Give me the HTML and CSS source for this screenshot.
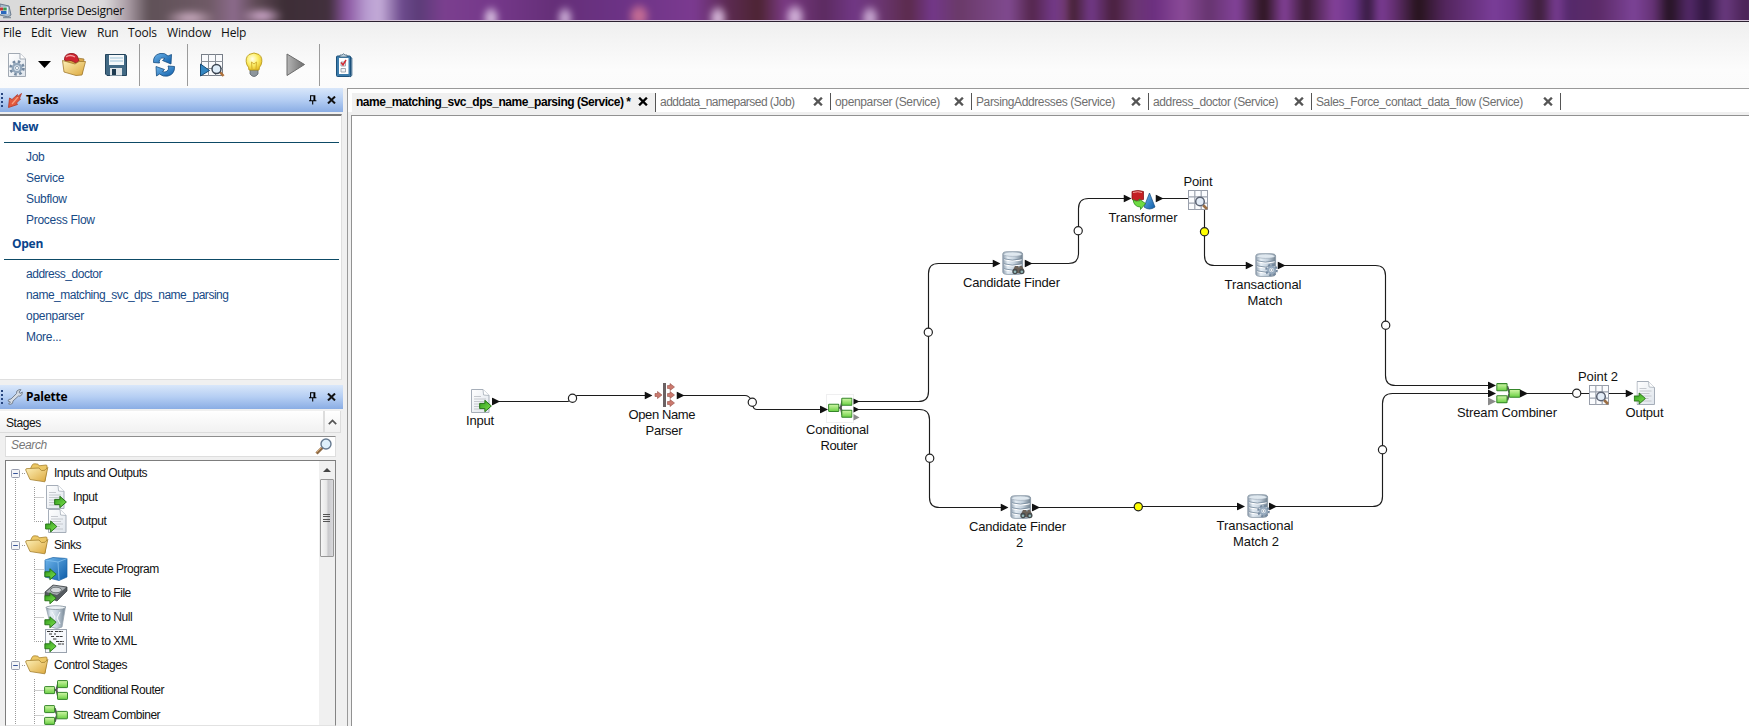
FILE: index.html
```html
<!DOCTYPE html>
<html lang="en">
<head>
<meta charset="utf-8">
<title>Enterprise Designer</title>
<link rel="stylesheet" href="styles.css">
</head>
<body>
<svg class="defs" width="0" height="0" aria-hidden="true">
  <defs>
    <linearGradient id="gFolder" x1="0" y1="0" x2="1" y2="1"><stop offset="0" stop-color="#fdf0b8"/><stop offset="1" stop-color="#dca83c"/></linearGradient>
    <linearGradient id="gGreen" x1="0" y1="0" x2="0" y2="1"><stop offset="0" stop-color="#d2f7a8"/><stop offset="1" stop-color="#69cf42"/></linearGradient>
    <linearGradient id="gArrow" x1="0" y1="0" x2="1" y2="1"><stop offset="0" stop-color="#2f9a1c"/><stop offset="1" stop-color="#7fe34d"/></linearGradient>
    <linearGradient id="gDb" x1="0" y1="0" x2="1" y2="0"><stop offset="0" stop-color="#8d9dad"/><stop offset=".25" stop-color="#e6eef5"/><stop offset=".6" stop-color="#c3d0dc"/><stop offset="1" stop-color="#71818f"/></linearGradient>
    <linearGradient id="gBlue" x1="0" y1="0" x2="1" y2="1"><stop offset="0" stop-color="#6fb6ec"/><stop offset="1" stop-color="#0d5ca8"/></linearGradient>
    <linearGradient id="gGrey" x1="0" y1="0" x2="1" y2="0"><stop offset="0" stop-color="#b5b5b5"/><stop offset="1" stop-color="#6e6e6e"/></linearGradient>
    <linearGradient id="gPage" x1="0" y1="0" x2="1" y2="1"><stop offset="0" stop-color="#ffffff"/><stop offset="1" stop-color="#dfe5ec"/></linearGradient>
    <radialGradient id="gBulb" cx=".4" cy=".35" r=".7"><stop offset="0" stop-color="#fffef0"/><stop offset=".5" stop-color="#fdf06a"/><stop offset="1" stop-color="#e6bd22"/></radialGradient>

    <symbol id="folder" viewBox="0 0 24 20">
      <path d="M4 9 L7 2.2 Q8 .6 10 .8 L13 1.2 L14 2.8 L21 2 Q22.5 2 22 4 L20 18 Z" fill="#ecc866" stroke="#aa8430" stroke-width=".8"/>
      <path d="M.7 7 Q.5 5.6 2 5.6 L14 5 L16.5 7.6 L20 7.2 L22.8 4.4 L19.8 18.8 L5 16.5 Z" fill="url(#gFolder)" stroke="#a5802f" stroke-width=".8"/>
    </symbol>
    <symbol id="garrow" viewBox="0 0 12 12">
      <path d="M.6 3.6 H5.4 V.7 L11.4 6 L5.4 11.3 V8.4 H.6 Z" fill="url(#gArrow)" stroke="#226f14" stroke-width=".9"/>
    </symbol>
    <symbol id="sheet" viewBox="0 0 19 24">
      <path d="M.5 .5 H12 L18 6.5 V23.5 H.5 Z" fill="url(#gPage)" stroke="#a6aeb9" stroke-width="1"/>
      <path d="M12 .5 L12.6 6 L18 6.5" fill="#fff" stroke="#a6aeb9" stroke-width=".8"/>
      <path d="M3 7.5h7M3 10h12M3 12.5h10M3 15h12M3 17.5h9M3 20h12" stroke="#bfc3c8" stroke-width=".9" fill="none"/>
    </symbol>
    <symbol id="input" viewBox="0 0 22 24">
      <use href="#sheet" x="1" y="0" width="19" height="24"/>
      <use href="#garrow" x="9" y="10.5" width="13" height="13"/>
    </symbol>
    <symbol id="output" viewBox="0 0 22 24">
      <use href="#sheet" x="3" y="0" width="19" height="24"/>
      <use href="#garrow" x="0" y="11" width="12.5" height="13"/>
    </symbol>
    <symbol id="router" viewBox="0 0 24 20">
      <path d="M10 10 H12.5 L14 4 H15 M12.5 10 L14 16 H15" stroke="#555" stroke-width="2" fill="none"/>
      <g fill="url(#gGreen)" stroke="#35862a"><rect x=".6" y="6.6" width="10" height="7" rx=".6"/><rect x="13.5" y=".6" width="10" height="7" rx=".6"/><rect x="13.5" y="12.4" width="10" height="7" rx=".6"/></g>
    </symbol>
    <symbol id="combiner" viewBox="0 0 24 20">
      <path d="M10 4 H11 L13 10 M10 16 H11 L13 10" stroke="#555" stroke-width="2" fill="none"/>
      <g fill="url(#gGreen)" stroke="#35862a"><rect x=".6" y=".6" width="10" height="7" rx=".6"/><rect x=".6" y="12.4" width="10" height="7" rx=".6"/><rect x="12.8" y="6.4" width="10.6" height="7.4" rx=".6"/></g>
    </symbol>
    <symbol id="db" viewBox="0 0 22 24">
      <path d="M.8 3 Q.8 .8 5 .7 H16 Q20.6 .8 20.6 3 V21 Q20.6 23.4 15 23.4 H6 Q.8 23.4 .8 21 Z" fill="url(#gDb)" stroke="#8795a3" stroke-width=".8"/>
      <ellipse cx="10.7" cy="3.2" rx="9.3" ry="2.2" fill="#dfe8ef" stroke="#9aa8b5" stroke-width=".6"/>
      <path d="M2 8.6 Q10 11.2 19.6 8.6 M2 13.6 Q10 16.2 19.6 13.6 M2 18.6 Q10 21.2 19.6 18.6" stroke="#fff" stroke-width="1.1" fill="none"/>
      <path d="M2 7.8 Q10 10.4 19.6 7.8 M2 12.8 Q10 15.4 19.6 12.8 M2 17.8 Q10 20.4 19.6 17.8" stroke="#74889a" stroke-width=".8" fill="none"/>
    </symbol>
    <symbol id="gear" viewBox="0 0 14 14">
      <circle cx="7" cy="7" r="5.6" fill="none" stroke="#7489a0" stroke-width="2.4" stroke-dasharray="2.2 2.2"/>
      <circle cx="7" cy="7" r="3.6" fill="#e5edf4" stroke="#93a7bb" stroke-width="2.2"/>
      <circle cx="7" cy="7" r="1.4" fill="#fff" stroke="#6f859b" stroke-width=".6"/>
    </symbol>
    <symbol id="finder" viewBox="0 0 24 24">
      <use href="#db" x="0" y="0" width="22" height="24"/>
      <path d="M11 19 L13 15 H16 L17 17 L18 15 H20 L22 19 V22 H11 Z" fill="#6b6157"/>
      <circle cx="13" cy="20.5" r="2.7" fill="#454b4d"/><circle cx="19.800" cy="20.5" r="2.7" fill="#454b4d"/>
      <circle cx="13" cy="20.7" r="1.3" fill="#93b9b9"/><circle cx="19.800" cy="20.7" r="1.3" fill="#93b9b9"/>
    </symbol>
    <symbol id="match" viewBox="0 0 24 24">
      <use href="#db" x="0" y="0" width="22" height="24"/>
      <use href="#gear" x="10" y="10.5" width="13" height="13"/>
    </symbol>
    <symbol id="point" viewBox="0 0 20 20">
      <rect x=".5" y=".5" width="19" height="19" fill="#fbfcfe" stroke="#989eaa"/>
      <path d="M6.8 0V20M13.2 0V20M0 6.8H20M0 13.2H20" stroke="#9da3af" stroke-width="1.2"/>
      <path d="M15 15 L19 19" stroke="#9b6f45" stroke-width="2.6"/>
      <circle cx="12" cy="11.5" r="4.3" fill="#e3ecf7" stroke="#5c6474" stroke-width="1.5"/>
    </symbol>
    <symbol id="minus" viewBox="0 0 9 9"><rect x=".5" y=".5" width="8" height="8" rx="1" fill="#f4f5f8" stroke="#979cae"/><path d="M2.2 4.5h4.6" stroke="#37549a"/></symbol>
    <symbol id="cross" viewBox="0 0 9 8"><path d="M1 .6 L8 7.4 M8 .6 L1 7.4" stroke="currentColor" stroke-width="2.1"/></symbol>
    <symbol id="pin" viewBox="0 0 8 10"><path d="M1.6 5.5V.8H5.8V5.5M5 .8V5.5M0 5.8H7.4M3.7 6V9.6" stroke="#000" stroke-width="1.1" fill="none"/></symbol>
    <symbol id="port" viewBox="0 0 8 8"><path d="M0 0 L8 4 L0 8Z"/></symbol>
  </defs>
</svg>

<div class="window">
  <header class="titlebar">
    <div class="aero"></div>
    <svg class="app-icon" viewBox="0 0 12 16"><path d="M0 1 L9 3 L11 12 L8 14 L0 12Z" fill="#a9bccd" stroke="#6b7b8e"/><rect x="0" y="4" width="8" height="7" fill="#e6eefa"/><rect x="0" y="4.500" width="3" height="3" fill="#c23b39"/><rect x="3.200" y="4.500" width="3.500" height="3" fill="#3b9a50"/><rect x="1" y="8" width="5.500" height="3" fill="#2a67bd"/><path d="M3 14.500H11" stroke="#82909f" stroke-width="1.500"/></svg>
    <span class="title">Enterprise Designer</span>
  </header>

  <nav class="menubar">
    <span class="m-file">File</span><span class="m-edit">Edit</span><span class="m-view">View</span><span class="m-run">Run</span><span class="m-tools">Tools</span><span class="m-window">Window</span><span>Help</span>
  </nav>

  <div class="toolbar">
    <svg width="348" height="44" viewBox="0 43 348 44">
      <path d="M139.500 44V86M187.500 44V86M319.500 44V86" stroke="#9b9b9b"/>
      <path d="M8.500 53.500H20L25.500 59V76.500H8.500Z" fill="url(#gPage)" stroke="#a1a9b3"/><path d="M20 53.500V59H25.500" fill="#fff" stroke="#a1a9b3"/>
      <use href="#gear" x="9" y="60" width="16" height="16"/>
      <path d="M38 61H51L44.500 68Z" fill="#000"/>
      <path d="M64 62 L67 56 L71 57 L84 59 L82 74Z" fill="#d8a648" stroke="#96702d" stroke-width=".7"/>
      <path d="M64.500 60 Q64 54.500 70 53.500 Q74 52.800 77 55.500 L79 61 L76 63 Q71 59 66 61Z" fill="#cf2430" stroke="#8a1720" stroke-width=".8"/>
      <path d="M66 57 Q70 54 75 57" stroke="#f4a0a0" stroke-width="1.300" fill="none"/>
      <path d="M62.500 60.500 L75 64 L79 61.500 L85.500 61.500 L82 75 L76 75.500 L64 72Z" fill="url(#gFolder)" stroke="#a17a2e" stroke-width=".8"/>
      <path d="M105.500 54.500H125.500L126.500 56V75.500H107L105.500 74Z" fill="#426984" stroke="#24445c"/>
      <rect x="109" y="55" width="15" height="10" fill="#f4f8fa"/><path d="M110 58H123M110 61H123" stroke="#9dc2d8"/>
      <rect x="110" y="68" width="12" height="7.500" fill="#e0e5e8"/><rect x="112" y="69" width="4" height="6" fill="#1e3b50"/>
      <path d="M153.500 62.500 Q153 55 160 53.500 Q165 52.500 168 56 L171.500 54.500 L171 64 L162.500 60.500 L165 58.500 Q161.500 56.500 159.500 60 Q159 61.500 159.500 63Z" fill="url(#gBlue)" stroke="#174d80" stroke-width=".8"/>
      <path d="M174.500 66.500 Q175 74 168 76 Q163 77 159.500 74 L156.500 76 L156 66.500 L164.500 69.500 L162.500 71.500 Q166.500 73 168.300 69.500 Q169 68 168 66Z" fill="url(#gBlue)" stroke="#174d80" stroke-width=".8"/>
      <g transform="translate(1 0)"><rect x="200.500" y="54.500" width="21" height="21" fill="#f9fafc" stroke="#777e88"/><path d="M207.500 54V76M214.500 54V76M200 61.500H222M200 68.500H222" stroke="#8a9098"/>
      <path d="M199.500 64V76L208.500 70.500Z" fill="#3487c2" stroke="#184b75"/><path d="M219 72L222.500 76" stroke="#af713b" stroke-width="2.600"/><circle cx="215.500" cy="69" r="4.500" fill="#dfedf9" stroke="#394350" stroke-width="1.400"/></g>
      <path d="M250 70V74Q254 79 258 74V70Z" fill="#8d969d" stroke="#5a6269" stroke-width=".8"/><path d="M249 70Q249 67 247 65Q244.500 58 249 54.500Q254 51.500 259 54.500Q263.500 58 261 65Q259 67 259 70Z" fill="url(#gBulb)" stroke="#bb9c1d" stroke-width=".9"/><path d="M252 69L251.500 62L254 64L256.500 62L256 69" fill="none" stroke="#cfaa2c" stroke-width=".9"/>
      <path d="M287 54L304.500 64.500L287 75.500Z" fill="url(#gGrey)" stroke="#6c6c6c"/>
    </svg>
    <svg class="clipboard" viewBox="0 0 18 25"><rect x="1.500" y="3" width="14" height="20.500" rx="1" fill="#3c7cab" stroke="#1c517b"/><path d="M15.500 4L16.800 5V22.500L15 24" fill="none" stroke="#1c517b"/><path d="M5 4V2H7Q8.500 -.5 10 2H12V4Z" fill="#c1d3df" stroke="#47677e" stroke-width=".8"/><rect x="4" y="5" width="9.500" height="16" fill="#fff"/><path d="M6 9H10.500V13H6Z M6 15.500H10.500V19H6Z" fill="#f3f4f7" stroke="#99a1ab" stroke-width=".9"/><path d="M6.200 9.500L8 12L11 7" fill="none" stroke="#d22b33" stroke-width="1.500"/></svg>
  </div>

  <div class="workspace">
    <aside class="dock">
      <section class="pane tasks">
        <div class="pane-head"><i class="grip"></i>
          <svg class="pane-icon" viewBox="0 0 14 15"><path d="M.5 14.500L1.500 5L4 6.500L9.500 1.500L9 4L13.500 .5L11.500 5.500L12.500 6L8.500 10L9.500 11.500Z" fill="#e2593d" stroke="#b0372a" stroke-width=".8"/><path d="M4 11L10 4" stroke="#f8a080" stroke-width="1.200"/></svg>
          <b>Tasks</b><svg class="pin"><use href="#pin"/></svg><svg class="close"><use href="#cross"/></svg></div>
        <div class="task-body">
          <h2>New</h2>
          <ul><li>Job</li><li>Service</li><li>Subflow</li><li>Process Flow</li></ul>
          <h2 class="open">Open</h2>
          <ul><li class="long">address_doctor</li><li class="long">name_matching_svc_dps_name_parsing</li><li>openparser</li><li>More...</li></ul>
        </div>
      </section>

      <section class="pane palette">
        <div class="pane-head"><i class="grip"></i>
          <svg class="pane-icon wrench" viewBox="0 0 16 16"><path d="M1 12 Q1 10 4 10 L9.500 4.500 Q9 1.500 12 .7 L14 .7 L12 3 L13 4.500 L15.300 3 Q15.800 6 13 7.200 L11.500 7 L6 12 Q6.200 15 3.500 15.300 L1.500 15 L3.500 13Z" fill="#d6dce4" stroke="#6c7888" stroke-width=".9"/></svg>
          <b>Palette</b><svg class="pin"><use href="#pin"/></svg><svg class="close"><use href="#cross"/></svg></div>
        <div class="stages"><span>Stages</span><i class="collapse"><svg width="9" height="6" viewBox="0 0 9 6"><path d="M.8 5.200L4.500 1.500L8.200 5.200" fill="none" stroke="#555" stroke-width="1.700"/></svg></i></div>
        <div class="search"><em>Search</em><svg width="18" height="17" viewBox="0 0 18 17"><path d="M1.500 15.500L7.500 9.500" stroke="#8e6a45" stroke-width="3"/><path d="M1.500 14.500L7 9" stroke="#d3a671" stroke-width="1"/><circle cx="11" cy="6" r="5" fill="#dff0fb" stroke="#667a90" stroke-width="1.400"/></svg></div>
        <div class="tree">
          <svg class="tree-lines" width="40" height="266" viewBox="0 0 40 266"><g fill="none" stroke="#9a9a9a" stroke-dasharray="1 1"><path d="M9.500 18V266M16 12.500H20M16 84.500H20M16 204.500H20M28.500 26V60.500H38M28.500 36.500H38M28.500 98V180.500H38M28.500 108.500H38M28.500 132.500H38M28.500 156.500H38M28.500 218V266M28.500 229.500H38M28.500 254.500H38"/></g></svg>
          <div class="rows">
            <div class="grp"><svg class="exp"><use href="#minus"/></svg><svg class="fld"><use href="#folder"/></svg><span>Inputs and Outputs</span></div>
            <div class="leaf"><svg class="ico"><use href="#input"/></svg><span>Input</span></div>
            <div class="leaf"><svg class="ico"><use href="#output"/></svg><span>Output</span></div>
            <div class="grp"><svg class="exp"><use href="#minus"/></svg><svg class="fld"><use href="#folder"/></svg><span>Sinks</span></div>
            <div class="leaf"><svg class="ico" viewBox="0 0 24 24"><path d="M1 3L9 .5L23 1.500V20L15 23.500L1 20Z" fill="url(#gBlue)" stroke="#1b61a3" stroke-width=".7"/><path d="M1 3L14 5L23 1.500M14 5L15 23" stroke="#85c2ef" stroke-width=".8" fill="none"/><use href="#garrow" x="0" y="11" width="13" height="12.500"/></svg><span>Execute Program</span></div>
            <div class="leaf"><svg class="ico" viewBox="0 0 24 24"><path d="M1 11L9 4L23 6V10L13 20L1 15Z" fill="#555b60" stroke="#34383b" stroke-width=".7"/><path d="M2 11L9.500 4.500L22 6.500L13 14Z" fill="#a9afb3"/><ellipse cx="12" cy="9" rx="5.500" ry="2.800" fill="#d5d9dc" stroke="#71777b"/><use href="#garrow" x="0" y="11" width="13" height="12.500"/></svg><span>Write to File</span></div>
            <div class="leaf"><svg class="ico" viewBox="0 0 24 24"><path d="M2 2L21.500 1.500L18 22Q13 25 7 22Z" fill="url(#gDb)" stroke="#98a4b0" stroke-width=".8"/><ellipse cx="11.800" cy="2.600" rx="9.500" ry="1.900" fill="#edf2f6" stroke="#8995a0" stroke-width=".8"/><path d="M8 7L11 12L8 18M16 7L13 13L16 19" stroke="#f6f9fc" fill="none"/><use href="#garrow" x="0" y="11" width="13" height="12.500"/></svg><span>Write to Null</span></div>
            <div class="leaf"><svg class="ico" viewBox="0 0 24 24"><rect x="1.500" y=".5" width="21" height="23" fill="#f7f9fc" stroke="#9aa2ae"/><path d="M3 2.500H9M11 2.500H19M5 5H8M10 5H12M7 7.500H10M12 7.500H19M9 10H13M12 12.500H20M14 15H20" stroke="#333" stroke-dasharray="3 .6"/><use href="#garrow" x="0" y="11" width="13" height="12.500"/></svg><span>Write to XML</span></div>
            <div class="grp"><svg class="exp"><use href="#minus"/></svg><svg class="fld"><use href="#folder"/></svg><span>Control Stages</span></div>
            <div class="leaf wide"><svg class="ico"><use href="#router"/></svg><span>Conditional Router</span></div>
            <div class="leaf wide"><svg class="ico"><use href="#combiner"/></svg><span>Stream Combiner</span></div>
          </div>
          <div class="scroll"><i class="up"></i><i class="thumb"><b></b></i></div>
        </div>
      </section>
    </aside>

    <main class="editor">
      <div class="tabs">
        <div class="tab active t1"><span>name_matching_svc_dps_name_parsing (Service) *</span><svg><use href="#cross"/></svg></div>
        <div class="tab t2"><span>adddata_nameparsed (Job)</span><svg><use href="#cross"/></svg></div>
        <div class="tab t3"><span>openparser (Service)</span><svg><use href="#cross"/></svg></div>
        <div class="tab t4"><span>ParsingAddresses (Service)</span><svg><use href="#cross"/></svg></div>
        <div class="tab t5"><span>address_doctor (Service)</span><svg><use href="#cross"/></svg></div>
        <div class="tab t6"><span>Sales_Force_contact_data_flow (Service)</span><svg><use href="#cross"/></svg></div>
      </div>
      <div class="canvas">
        <svg class="flow" width="1397" height="610" viewBox="352 116 1397 610">
          <g class="wire">
            <path d="M499 401.500H568L577 395.500H645"/>
            <path d="M683 395.500H745Q749 395.500 751 400L753 406Q753.500 409.500 757 409.500H821"/>
            <path d="M858 401.500H918.500Q928.500 401.500 928.500 391.500V273.500Q928.500 263.500 938.500 263.500H993"/>
            <path d="M858 409.500H919.500Q929.500 409.500 929.500 419.500V497.500Q929.500 507.500 939.500 507.500H1001"/>
            <path d="M1031 263.500H1068.500Q1078.500 263.500 1078.500 253.500V208.500Q1078.500 198.500 1088.500 198.500H1124"/>
            <path d="M1162 198.500H1189M1204.500 210V255.500Q1204.500 265.500 1214.500 265.500H1246"/>
            <path d="M1284 265.500H1375.500Q1385.500 265.500 1385.500 275.500V375.500Q1385.500 385.500 1395.500 385.500H1489"/>
            <path d="M1039 507.500H1138L1140 506.500H1238M1275 506.500H1372.500Q1382.500 506.500 1382.500 496.500V403.500Q1382.500 393.500 1392.500 393.500H1489"/>
            <path d="M1527 393.500H1589M1609 393.500H1626"/>
          </g>
          <rect x="826.500" y="394.500" width="27" height="28" fill="#fff" stroke="#efeff0"/>
          <g class="ports">
            <use href="#port" x="492" y="397.500" width="8" height="8"/>
            <use href="#port" x="644.500" y="391.500" width="8" height="8"/><use href="#port" x="676.500" y="391.500" width="8" height="8"/>
            <use href="#port" x="820" y="405.500" width="8" height="8"/>
            <path d="M853.500 398.500L859.500 401.500L853.500 404.500ZM853.500 406.500L859.500 409.500L853.500 412.500Z"/>
            <path d="M853.500 414L859.500 417.500L853.500 420.500Z" fill="#8a8a8a"/>
            <use href="#port" x="992.500" y="259.500" width="8" height="8"/><use href="#port" x="1024.500" y="259.500" width="8" height="8"/>
            <use href="#port" x="1123.500" y="194.500" width="8" height="8"/>
            <use href="#port" x="1245.500" y="261.500" width="8" height="8"/><use href="#port" x="1277.500" y="261.500" width="8" height="8"/>
            <use href="#port" x="1000.500" y="503.500" width="8" height="8"/><use href="#port" x="1032" y="503.500" width="8" height="8"/>
            <use href="#port" x="1237" y="502.500" width="8" height="8"/><use href="#port" x="1269" y="502.500" width="8" height="8"/>
            <use href="#port" x="1488" y="381.500" width="8" height="8"/><use href="#port" x="1488" y="389.500" width="8" height="8"/>
            <use href="#port" x="1488" y="397.500" width="8" height="8" fill="#8a8a8a"/>
            <use href="#port" x="1625.500" y="389.500" width="8" height="8"/>
          </g>
          <g>
            <use href="#input" x="470" y="389" width="22" height="24"/>
            <rect x="663" y="383" width="3" height="24" fill="#6b6264"/>
            <g fill="#cb796e" stroke="#965048" stroke-width=".6"><path id="redarrow" d="M655 393.500H657.500V391.500L662 395L657.500 398.500V396.500H655Z"/><use href="#redarrow" x="12.500" y="-8"/><use href="#redarrow" x="12.500"/><use href="#redarrow" x="12.500" y="8"/></g>
            <use href="#router" x="828" y="397" width="24.500" height="21.500"/>
            <use href="#finder" x="1002" y="251" width="24" height="24"/>
            <use href="#match" x="1255" y="253" width="24" height="24"/>
            <use href="#finder" x="1010" y="495" width="24" height="24"/>
            <use href="#match" x="1247" y="494" width="24" height="24"/>
            <path d="M1132 191.500Q1138 189.500 1143.500 191.500V199.500L1134 201L1132 199Z" fill="#c41f24" stroke="#86181b" stroke-width=".8"/><path d="M1133 192.500Q1138 191 1142 192.500" stroke="#f2a09a" fill="none"/>
            <path d="M1149.500 193L1155 207Q1149.500 211 1144 207Z" fill="url(#gBlue)" stroke="#174c7e" stroke-width=".7"/>
            <path d="M1133 199.500Q1136 202 1139.500 201L1139 199L1145.500 203.500L1140.500 209.500V207Q1134 207 1133 199.500Z" fill="#6fdc42" stroke="#2b8b1c" stroke-width=".8"/>
            <use href="#point" x="1188" y="190" width="20" height="20"/>
            <use href="#point" x="1589" y="385" width="20" height="20"/>
            <use href="#combiner" x="1496" y="383" width="25" height="20.500"/>
            <use href="#output" x="1633.500" y="381" width="22" height="24"/>
          </g>
          <g class="ports"><use href="#port" x="1155.500" y="194.500" width="8" height="8"/><use href="#port" x="1520" y="389.500" width="8" height="8"/></g>
          <g class="joint">
            <circle cx="572.500" cy="398.200" r="4.100"/><circle cx="752.300" cy="402.200" r="4.100"/><circle cx="928.300" cy="332.300" r="4.100"/><circle cx="929.700" cy="458.200" r="4.100"/><circle cx="1078.200" cy="230.700" r="4.100"/><circle cx="1385.700" cy="325.300" r="4.100"/><circle cx="1382.500" cy="449.700" r="4.100"/><circle cx="1576.700" cy="393.300" r="4.100"/>
            <circle class="hot" cx="1204.500" cy="231.800" r="4.100"/><circle class="hot" cx="1138.300" cy="506.700" r="4.100"/>
          </g>
          <g class="label">
            <text x="480" y="425" textLength="28">Input</text>
            <text x="662" y="419" textLength="67">Open Name</text><text x="664" y="435" textLength="37">Parser</text>
            <text x="837.500" y="434" textLength="63">Conditional</text><text x="839" y="450" textLength="37">Router</text>
            <text x="1011.500" y="287" textLength="97">Candidate Finder</text>
            <text x="1143" y="222" textLength="69">Transformer</text><text x="1198" y="186" textLength="29">Point</text>
            <text x="1263" y="289" textLength="77">Transactional</text><text x="1265" y="305" textLength="35">Match</text>
            <text x="1017.500" y="531" textLength="97">Candidate Finder</text><text x="1019.500" y="547">2</text>
            <text x="1255" y="530" textLength="77">Transactional</text><text x="1256" y="546" textLength="46">Match 2</text>
            <text x="1507" y="417" textLength="100">Stream Combiner</text><text x="1598" y="381" textLength="40">Point 2</text><text x="1644.500" y="417" textLength="38">Output</text>
          </g>
        </svg>
      </div>
    </main>
  </div>
</div>
</body>
</html>
```
FILE: styles.css
```css
* { box-sizing: border-box; }
body { margin: 0; overflow: hidden; background: #f0f0f0; font: 12px "Liberation Sans", Arial, sans-serif; color: #111; }
.defs { position: absolute; }
.window { width: 1749px; height: 726px; display: flex; flex-direction: column; background: linear-gradient(#efefef 22px, #fcfcfc 70px, #fbfbfb 88px, #f0f0f0 89px); }

.titlebar { position: relative; flex: none; height: 22px; display: flex; align-items: center; overflow: hidden; border-bottom: 1px solid #2b2030; }
.aero { position: absolute; inset: -8px -6px; filter: blur(3px); background:
  radial-gradient(ellipse 9px 13px at 497px 26px, #d3b9dc 35%, transparent),
  radial-gradient(ellipse 9px 13px at 571px 26px, #c7a8d2 35%, transparent),
  radial-gradient(ellipse 12px 14px at 645px 24px, #c46c94 35%, transparent),
  radial-gradient(ellipse 10px 14px at 724px 26px, #d3b4d6 35%, transparent),
  radial-gradient(ellipse 11px 15px at 801px 25px, #cfaed6 35%, transparent),
  radial-gradient(ellipse 10px 14px at 876px 26px, #c6a5cf 35%, transparent),
  radial-gradient(ellipse 26px 9px at 196px 26px, #c4a6ba 20%, transparent),
  radial-gradient(ellipse 22px 9px at 268px 24px, #c7a2c4 20%, transparent),
  linear-gradient(90deg, #dadada 0, #dcdadb 110px, #a99ba4 134px, #5f5157 155px, #6f5a66 215px, #8c6b8c 240px, #5e4a55 262px, #3d2e36 290px, #42303d 335px, #8a55a0 352px, #b79bd0 372px, #c4acd8 386px, #6c4a8c 408px, #5c3c78 425px, #7b3f8f 450px, #75388a 500px, #652f78 560px, #6b3284 620px, #7b3a90 700px, #5b2a50 735px, #4d2433 765px, #7a3a84 790px, #5c2b60 830px, #713785 860px, #6b3672 885px, #5b2b4c 915px, #73378a 938px, #6a3a68 965px, #804a90 1015px, #54264c 1038px, #73398a 1060px, #70396f 1072px, #42202f 1078px, #73398a 1097px, #48203c 1119px, #6b3672 1140px, #6c2f80 1160px, #8a4a98 1188px, #66346f 1215px, #83429a 1243px, #2b141d 1270px, #84419a 1290px, #3a1b33 1312px, #84419a 1340px, #6a3388 1360px, #341a3c 1374px, #7c3c95 1386px, #642f72 1400px, #25131a 1424px, #52255c 1450px, #7a3d99 1500px, #6d3488 1520px, #3c1e38 1546px, #783c93 1562px, #54296a 1575px, #5c2b68 1605px, #7c4397 1640px, #643174 1660px, #23121f 1675px, #54296a 1695px, #2e163c 1712px, #6a3a80 1730px, #4c2458 1750px); }
.titlebar::after { content: ""; position: absolute; left: 0; right: 0; bottom: 0; height: 1px; background: #d6c6da; }
.app-icon { position: relative; width: 12px; height: 16px; }
.title { position: relative; margin: 0 0 1px 7px; font: 12px "Open Sans", sans-serif; letter-spacing: -.3px; }

.menubar { flex: none; height: 21px; padding: 0 3px 0 3px; display: flex; align-items: center; font: 12px "Open Sans", sans-serif; letter-spacing: -.2px; }
.menubar span { flex: none; }
.m-file { width: 28px; } .m-edit { width: 30px; } .m-view { width: 36px; } .m-run { width: 31px; } .m-tools { width: 39px; } .m-window { width: 54px; }
.toolbar { flex: none; height: 45px; display: flex; align-items: flex-start; }
.clipboard { width: 18px; height: 25px; margin: 10px 0 0 -13px; }

.workspace { flex: 1; min-height: 0; display: flex; gap: 4px; }
.dock { width: 343px; flex: none; display: flex; flex-direction: column; gap: 5px; }
.pane-head { height: 24px; display: flex; align-items: center; background: linear-gradient(#d9e7fa, #b5cef3 50%, #8aade4); }
.pane-head b { font: bold 12px/16px "Open Sans", sans-serif; color: #000; flex: 1; letter-spacing: -.25px; margin-left: 4px; margin-bottom: 1px; }
.grip { width: 2px; height: 15px; margin: 0 5px 0 1px; background: repeating-linear-gradient(#27457f 0 2px, transparent 2px 4px); }
.pane-icon { width: 14px; height: 15px; }
.wrench { width: 16px; height: 16px; margin: 0 -1px; }
.pin { width: 8px; height: 10px; margin-right: 10px; }
.close { width: 9px; height: 8px; margin-right: 7px; }

.tasks { height: 292px; flex: none; }
.task-body { margin: 2px 1px 0 0; height: 266px; background: #fff; border: 1px solid #dfdfdf; border-top: 2px solid #777; border-left: 0; color: #174a86; letter-spacing: -.28px; }
.task-body h2 { margin: 0 2px 0 4px; height: 27px; padding: 3px 0 0 8px; font: bold 12px/15px "Open Sans", sans-serif; color: #09448b; border-bottom: 1px solid #0d4a66; }
.task-body h2.open { height: 28px; padding-top: 4px; }
.task-body ul { list-style: none; margin: 0; padding: 4px 0 1px 26px; }
.task-body li { height: 21px; line-height: 21px; }
.task-body .long { letter-spacing: -.48px; }

.palette { flex: 1; min-height: 0; display: flex; flex-direction: column; }
.palette .pane-head { flex: none; }
.stages { flex: none; height: 22px; margin: 2px 2px 0 0; display: flex; align-items: center; padding-left: 6px; border-bottom: 1px solid #dcdcdc; background: linear-gradient(#fff, #f1f1f1); letter-spacing: -.4px; }
.stages span { flex: 1; padding-top: 2px; }
.collapse { width: 18px; height: 21px; border-left: 2px solid #ddd; border-right: 1px solid #ddd; display: flex; align-items: center; justify-content: center; }
.search { flex: none; margin: 3px 7px 0 5px; height: 21px; background: #fff; border: 1px solid #dedede; border-top-color: #8d8d8d; display: flex; justify-content: space-between; align-items: center; padding: 0 2px 0 5px; color: #777; letter-spacing: -.35px; }
.search em { padding-bottom: 3px; }
.tree { position: relative; flex: 1; min-height: 0; overflow: hidden; margin: 3px 7px 0 5px; display: flex; background: #fff; border: 1px solid #7d7d7d; border-bottom: 1px solid #e2e2e2; border-right-color: #848484; letter-spacing: -.46px; }
.tree-lines { position: absolute; left: 0; top: 0; }
.rows { flex: 1; }
.grp, .leaf { position: relative; height: 24px; display: flex; align-items: center; }
.exp { width: 9px; height: 9px; margin: 0 5px 0 5px; }
.fld { width: 24px; height: 20px; margin-right: 5px; }
.leaf { padding-left: 38px; }
.ico { width: 24px; height: 24px; margin-right: 5px; }
.wide { height: 25px; }
.wide .ico { height: 20px; }
.scroll { width: 16px; display: flex; flex-direction: column; align-items: center; padding-right: 1px; background: #f0f0f0; }
.up { border: 4px solid transparent; border-bottom: 4px solid #444; border-top: 0; margin: 7px 0; }
.thumb { width: 14px; height: 78px; border: 1px solid #979797; border-radius: 1px; background: linear-gradient(90deg, #f6f6f6, #e8e8e8 45%, #c9c9cc 60%, #d9d9dc); display: flex; align-items: center; justify-content: center; }
.thumb b { width: 7px; height: 8px; background: repeating-linear-gradient(#555 0 1px, transparent 1px 2.3px); }

.editor { flex: 1; min-width: 0; border-top: 1px solid #999; border-left: 1px solid #999; padding-left: 3px; display: flex; flex-direction: column; background: linear-gradient(#fff 23px, #f0f0f0 23px); }
.tabs { height: 26px; flex: none; display: flex; align-items: flex-start; padding-left: 1px; }
.tab { flex: none; height: 17px; margin-top: 4px; display: flex; align-items: center; justify-content: space-between; padding: 1px 7px 0 4px; border-right: 1px solid #555; color: #6f6f6f; white-space: nowrap; }
.tab svg { width: 10px; height: 9px; margin-bottom: 1px; color: #555; }
.tab.active { height: 19px; padding-bottom: 2px; background: #f0f0f0; color: #000; font-weight: bold; }
.tab.active svg { color: #000; }
.t1 { width: 304px; letter-spacing: -.47px; }
.t2 { width: 175px; letter-spacing: -.54px; }
.t3 { width: 141px; letter-spacing: -.36px; }
.t4 { width: 177px; letter-spacing: -.38px; }
.t5 { width: 163px; letter-spacing: -.37px; }
.t6 { width: 249px; letter-spacing: -.39px; }
.canvas { flex: 1; min-height: 0; overflow: hidden; background: #fff; border-top: 1px solid #919191; border-left: 1px solid #919191; }
.flow { display: block; }
.wire { fill: none; stroke: #1c1c1c; stroke-width: 1.15; }
.ports { fill: #111; }
.joint { fill: #fff; stroke: #222; stroke-width: 1.2; }
.joint .hot { fill: #ff0; }
.label { font: 13px "Liberation Sans", Arial, sans-serif; fill: #111; text-anchor: middle; }
```
